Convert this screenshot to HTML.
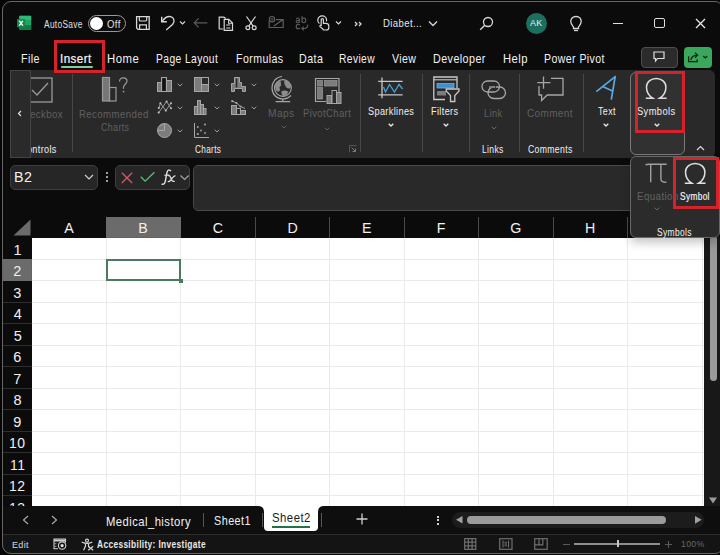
<!DOCTYPE html>
<html><head><meta charset="utf-8"><style>
html,body{margin:0;padding:0;}
body{width:720px;height:555px;overflow:hidden;position:relative;background:#0b0b0b;font-family:"Liberation Sans",sans-serif;}
.t{position:absolute;line-height:1;white-space:nowrap;transform-origin:0 0;}
svg{overflow:visible}
</style></head><body>
<svg style="position:absolute;left:16px;top:15px" width="16" height="16" viewBox="0 0 16 16" fill="none"><rect x="3.3" y="0.8" width="11.9" height="14.1" rx="1" fill="#1a8a50"/><rect x="3.3" y="0.8" width="11.9" height="4.7" fill="#2fb878"/><rect x="9" y="5.5" width="6.2" height="4.7" fill="#21a366"/><rect x="3.3" y="10.2" width="11.9" height="4.7" fill="#107c41"/><rect x="1" y="3.9" width="8.1" height="8.6" rx="0.8" fill="#13864b"/><path d="M3.2 5.8 L6.9 10.6 M6.9 5.8 L3.2 10.6" stroke="#e8fff0" stroke-width="1.4"/></svg>
<div id="t0" class="t" style="left:43.96px;top:20.41px;font-size:10.03px;color:#e0e0e0;font-weight:400;font-family:'Liberation Sans', sans-serif;font-style:normal;transform:scaleX(0.8317);letter-spacing:0.40px;">AutoSave</div>
<div style="position:absolute;left:87.5px;top:14.5px;width:38px;height:17.5px;border:1.7px solid #9a9a9a;border-radius:9px;box-sizing:border-box;"></div>
<div style="position:absolute;left:90.2px;top:16.8px;width:13.2px;height:13.2px;background:#fff;border-radius:50%;"></div>
<div id="t1" class="t" style="left:106.87px;top:20.41px;font-size:10.03px;color:#e0e0e0;font-weight:400;font-family:'Liberation Sans', sans-serif;font-style:normal;transform:scaleX(0.9566);letter-spacing:0.40px;">Off</div>
<svg style="position:absolute;left:135px;top:15px" width="16" height="16" viewBox="0 0 16 16" fill="none"><path d="M1.6 1.6 H14.2 V14.4 H3 L1.6 13 Z" stroke="#d8d8d8" stroke-width="1.3"/><path d="M4.3 1.6 V4.8 C4.3 5.6,4.8 6,5.5 6 H10.5 C11.2 6,11.7 5.6,11.7 4.8 V1.6" stroke="#d8d8d8" stroke-width="1.2"/><path d="M4.6 14.4 V9.8 H11.4 V14.4" stroke="#d8d8d8" stroke-width="1.2"/></svg>
<svg style="position:absolute;left:159px;top:15px" width="17" height="16" viewBox="0 0 17 16" fill="none"><path d="M2.7 1.7 V6.7 H7.8" stroke="#d8d8d8" stroke-width="1.4"/><path d="M3 6.5 C5 3.5,8 1.5,10.5 1.5 C13 1.5,15 3.5,15 6 C15 7.5,14.2 8.6,13.5 9.5 L7.2 15" stroke="#d8d8d8" stroke-width="1.3"/></svg>
<svg style="position:absolute;left:179px;top:20px" width="7" height="6" viewBox="0 0 7 6" fill="none"><path d="M1 1.5 L3.5 4 L6 1.5" stroke="#d8d8d8" stroke-width="1.2"/></svg>
<svg style="position:absolute;left:193px;top:17px" width="16" height="12" viewBox="0 0 16 12" fill="none"><path d="M1.2 5.8 H14.3 M5.6 1.3 L1.2 5.8 L5.6 10.3" stroke="#5c5c5c" stroke-width="1.2"/></svg>
<svg style="position:absolute;left:218px;top:15.5px" width="16" height="16" viewBox="0 0 16 16" fill="none"><path d="M5.2 13 H1.2 V1.2 H5.5 C6.5 1.2,7.2 1.9,7.4 2.8" stroke="#d8d8d8" stroke-width="1.2"/><path d="M6.2 3.3 H10.8 L14.5 7 V14.3 H6.2 Z" stroke="#d8d8d8" stroke-width="1.2" fill="#0b0b0b"/><path d="M10.6 3.5 V7.2 H14.3" stroke="#d8d8d8" stroke-width="1.1"/><path d="M8.2 9 H12.3 M8.2 12 H12.3" stroke="#d8d8d8" stroke-width="1"/></svg>
<svg style="position:absolute;left:245px;top:16px" width="12" height="15" viewBox="0 0 12 15" fill="none"><path d="M1.5 0.5 L8.2 10.2 M10.5 0.5 L3.8 10.2" stroke="#d8d8d8" stroke-width="1.2"/><circle cx="2.8" cy="11.7" r="1.9" stroke="#d8d8d8" stroke-width="1.2"/><circle cx="9.2" cy="11.7" r="1.9" stroke="#d8d8d8" stroke-width="1.2"/></svg>
<svg style="position:absolute;left:268px;top:15px" width="17" height="15" viewBox="0 0 17 15" fill="none"><path d="M1.2 5.5 V12.5 H15.2 V4.6 H8 M5.8 11 L15.2 4.6" stroke="#5e5e5e" stroke-width="1.2"/><circle cx="4" cy="4.2" r="2.7" fill="#0b0b0b" stroke="#5e5e5e" stroke-width="1.1"/><circle cx="4" cy="4.2" r="1" stroke="#5e5e5e" stroke-width="0.8"/></svg>
<svg style="position:absolute;left:295px;top:16px" width="15" height="15" viewBox="0 0 15 15" fill="none"><path d="M1.5 3.2 C1.5 2.2,2.3 2,3 2 C3.8 2,4.4 2.4,4.4 3.3 V6.5 M4.4 4.3 C2.8 4.3,1.2 4.5,1.2 5.5 C1.2 6.4,2 6.7,2.7 6.7 C3.6 6.7,4.4 6,4.4 5.2 M7 0 V6.6 M7 4.3 C7 3,7.8 2,9 2 C10.2 2,10.8 3,10.8 4.3 C10.8 5.6,10.2 6.7,9 6.7 C7.8 6.7,7 5.6,7 4.3 M5 9 C4.3 8.3,3.8 8.2,3.2 8.2 C2 8.2,1.2 9.2,1.2 10.5 C1.2 11.8,2 12.8,3.2 12.8 C3.8 12.8,4.3 12.6,5 12 M12.8 8.5 C12.8 11,11.5 12.5,9 12.5 H7 M8.8 10.6 L6.8 12.5 L8.8 14.4" stroke="#5e5e5e" stroke-width="1.1"/></svg>
<svg style="position:absolute;left:316.5px;top:15px" width="13" height="16" viewBox="0 0 13 16" fill="none"><path d="M2.4 8.6 C1.3 7.7,0.8 6.5,0.8 5.2 C0.8 2.7,2.7 0.8,5.2 0.8 C7.6 0.8,9.6 2.7,9.6 5.2 C9.6 5.6,9.5 6,9.4 6.4" stroke="#d8d8d8" stroke-width="1.2"/><path d="M4.2 10.6 V4.6 C4.2 3.4,6.4 3.4,6.4 4.6 V8.3 H8.8 C10.6 8.3,11.8 9.4,11.8 11 V12.4 C11.8 14,10.6 15,9.2 15 H6.8 L3 11.6 C2.4 11,3.2 10,4.2 10.6 Z" fill="#0b0b0b" stroke="#d8d8d8" stroke-width="1.2" stroke-linejoin="round"/></svg>
<svg style="position:absolute;left:335px;top:20px" width="7" height="6" viewBox="0 0 7 6" fill="none"><path d="M1 1.5 L3.5 4 L6 1.5" stroke="#d8d8d8" stroke-width="1.2"/></svg>
<svg style="position:absolute;left:354px;top:21px" width="8" height="6" viewBox="0 0 8 6" fill="none"><path d="M1 1 L3 3 L1 5 M5 1 L7 3 L5 5" stroke="#d8d8d8" stroke-width="1.3"/></svg>
<div id="t2" class="t" style="left:383.24px;top:17.77px;font-size:10.90px;color:#e6e6e6;font-weight:400;font-family:'Liberation Sans', sans-serif;font-style:normal;transform:scaleX(0.8770);letter-spacing:0.44px;">Diabet...</div>
<svg style="position:absolute;left:428px;top:20px" width="10" height="7" viewBox="0 0 10 7" fill="none"><path d="M1 1.5 L5 5.5 L9 1.5" stroke="#d8d8d8" stroke-width="1.3"/></svg>
<svg style="position:absolute;left:479px;top:16px" width="15" height="15" viewBox="0 0 15 15" fill="none"><circle cx="9" cy="6" r="4.5" stroke="#d8d8d8" stroke-width="1.3"/><path d="M5.8 9.2 L1.2 13.8" stroke="#d8d8d8" stroke-width="1.4"/></svg>
<div style="position:absolute;left:525.5px;top:12.5px;width:21px;height:21px;background:#1c6f5f;border-radius:50%;"></div>
<div id="t3" class="t" style="left:529.93px;top:18.54px;font-size:9.16px;color:#e8f0ee;font-weight:400;font-family:'Liberation Sans', sans-serif;font-style:normal;transform:scaleX(0.9705);letter-spacing:0.37px;">AK</div>
<svg style="position:absolute;left:569px;top:15px" width="14" height="17" viewBox="0 0 14 17" fill="none"><path d="M7 1.5 C3.5 1.5,1.8 4,1.8 6.5 C1.8 9,3.8 10.5,4.5 12 V13.5 H9.5 V12 C10.2 10.5,12.2 9,12.2 6.5 C12.2 4,10.5 1.5,7 1.5 Z" stroke="#d8d8d8" stroke-width="1.3"/><path d="M5 15.5 H9" stroke="#d8d8d8" stroke-width="1.3"/></svg>
<div style="position:absolute;left:612.5px;top:22.5px;width:10px;height:1.3px;background:#e0e0e0;"></div>
<div style="position:absolute;left:654px;top:18.3px;width:10.5px;height:10px;border:1.3px solid #e0e0e0;border-radius:2px;box-sizing:border-box;"></div>
<svg style="position:absolute;left:695px;top:18px" width="11" height="11" viewBox="0 0 11 11" fill="none"><path d="M1 1 L10 10 M10 1 L1 10" stroke="#e8e8e8" stroke-width="1.3"/></svg>
<div id="t4" class="t" style="left:21.00px;top:52.88px;font-size:12.06px;color:#f2f2f2;font-weight:400;font-family:'Liberation Sans', sans-serif;font-style:normal;transform:scaleX(0.8871);letter-spacing:0.48px;">File</div>
<div id="t5" class="t" style="left:59.93px;top:52.88px;font-size:12.06px;color:#f2f2f2;font-weight:400;font-family:'Liberation Sans', sans-serif;font-style:normal;transform:scaleX(0.9618);-webkit-text-stroke:0.22px #f2f2f2;letter-spacing:0.48px;">Insert</div>
<div id="t6" class="t" style="left:107.22px;top:52.88px;font-size:12.06px;color:#f2f2f2;font-weight:400;font-family:'Liberation Sans', sans-serif;font-style:normal;transform:scaleX(0.9443);letter-spacing:0.48px;">Home</div>
<div id="t7" class="t" style="left:156.18px;top:52.88px;font-size:12.06px;color:#f2f2f2;font-weight:400;font-family:'Liberation Sans', sans-serif;font-style:normal;transform:scaleX(0.8527);letter-spacing:0.48px;">Page Layout</div>
<div id="t8" class="t" style="left:236.15px;top:52.88px;font-size:12.06px;color:#f2f2f2;font-weight:400;font-family:'Liberation Sans', sans-serif;font-style:normal;transform:scaleX(0.8796);letter-spacing:0.48px;">Formulas</div>
<div id="t9" class="t" style="left:299.28px;top:52.88px;font-size:12.06px;color:#f2f2f2;font-weight:400;font-family:'Liberation Sans', sans-serif;font-style:normal;transform:scaleX(0.8867);letter-spacing:0.48px;">Data</div>
<div id="t10" class="t" style="left:339.18px;top:52.88px;font-size:12.06px;color:#f2f2f2;font-weight:400;font-family:'Liberation Sans', sans-serif;font-style:normal;transform:scaleX(0.8503);letter-spacing:0.48px;">Review</div>
<div id="t11" class="t" style="left:391.95px;top:52.88px;font-size:12.06px;color:#f2f2f2;font-weight:400;font-family:'Liberation Sans', sans-serif;font-style:normal;transform:scaleX(0.8767);letter-spacing:0.48px;">View</div>
<div id="t12" class="t" style="left:432.55px;top:52.88px;font-size:12.06px;color:#f2f2f2;font-weight:400;font-family:'Liberation Sans', sans-serif;font-style:normal;transform:scaleX(0.8917);letter-spacing:0.48px;">Developer</div>
<div id="t13" class="t" style="left:502.81px;top:52.88px;font-size:12.06px;color:#f2f2f2;font-weight:400;font-family:'Liberation Sans', sans-serif;font-style:normal;transform:scaleX(0.9345);letter-spacing:0.48px;">Help</div>
<div id="t14" class="t" style="left:544.16px;top:52.88px;font-size:12.06px;color:#f2f2f2;font-weight:400;font-family:'Liberation Sans', sans-serif;font-style:normal;transform:scaleX(0.8763);letter-spacing:0.48px;">Power Pivot</div>
<div style="position:absolute;left:61px;top:65.6px;width:31.5px;height:2.1px;background:#86cc96;border-radius:1px;"></div>
<div style="position:absolute;left:641px;top:46.5px;width:36.5px;height:21px;background:#2b2b2b;border:1px solid #4e4e4e;border-radius:4px;box-sizing:border-box;"></div>
<svg style="position:absolute;left:653px;top:51px" width="12" height="11" viewBox="0 0 12 11" fill="none"><path d="M1 1 H11 V7.5 H4.5 L2.5 10 V7.5 H1 Z" stroke="#e0e0e0" stroke-width="1.2"/></svg>
<div style="position:absolute;left:684px;top:46.5px;width:27.5px;height:21px;background:#3aa75c;border-radius:4px;"></div>
<svg style="position:absolute;left:687px;top:51px" width="22" height="12" viewBox="0 0 22 12" fill="none"><path d="M1.6 5.2 V10.6 H10.2 V8.2" stroke="#0a2612" stroke-width="1.2"/><path d="M3.8 9.2 C4.2 6.2,6.2 4.3,10.2 4.3" stroke="#0a2612" stroke-width="1.2"/><path d="M8 1.8 L10.6 4.3 L8 6.8" stroke="#0a2612" stroke-width="1.2"/><path d="M16.2 5 L18.2 7 L20.2 5" stroke="#0a2612" stroke-width="1.2"/></svg>
<div style="position:absolute;left:9.5px;top:70px;width:705px;height:87.5px;background:#292929;border-radius:6px;"></div>
<svg style="position:absolute;left:26px;top:77px" width="27" height="26" viewBox="0 0 27 26" fill="none"><rect x="1" y="1" width="25" height="24" stroke="#9a9a9a" stroke-width="1.3"/><path d="M6 13 L11 18 L22 6" stroke="#9a9a9a" stroke-width="1.3"/></svg>
<div id="t15" class="t" style="left:16.52px;top:109.01px;font-size:10.61px;color:#606060;font-weight:400;font-family:'Liberation Sans', sans-serif;font-style:normal;transform:scaleX(0.9091);letter-spacing:0.42px;">Checkbox</div>
<div id="t16" class="t" style="left:20.38px;top:144.71px;font-size:10.03px;color:#f0f0f0;font-weight:400;font-family:'Liberation Sans', sans-serif;font-style:normal;transform:scaleX(0.9083);letter-spacing:0.40px;">Controls</div>
<div style="position:absolute;left:71.5px;top:74px;width:1px;height:77.5px;background:#474747;"></div>
<svg style="position:absolute;left:101px;top:76px" width="29" height="27" viewBox="0 0 29 27" fill="none"><rect x="1.5" y="1.5" width="7" height="23.5" stroke="#9a9a9a" stroke-width="1.2" fill="#767676"/><rect x="8.5" y="11.5" width="6.5" height="13.5" stroke="#9a9a9a" stroke-width="1.2"/><path d="M18.5 5.5 C18.5 2.8,20.3 1.8,22.3 1.8 C24.5 1.8,26 3.2,26 5.2 C26 7.8,22.5 8.3,22.5 11.5 V12.8" stroke="#9a9a9a" stroke-width="1.2"/><circle cx="22.5" cy="15.6" r="0.9" fill="#9a9a9a"/></svg>
<div id="t17" class="t" style="left:79.23px;top:109.01px;font-size:10.61px;color:#606060;font-weight:400;font-family:'Liberation Sans', sans-serif;font-style:normal;transform:scaleX(0.9110);letter-spacing:0.42px;">Recommended</div>
<div id="t18" class="t" style="left:100.54px;top:121.51px;font-size:10.61px;color:#606060;font-weight:400;font-family:'Liberation Sans', sans-serif;font-style:normal;transform:scaleX(0.8386);letter-spacing:0.42px;">Charts</div>
<svg style="position:absolute;left:156.5px;top:76.5px" width="16" height="16" viewBox="0 0 16 16" fill="none"><rect x="0.5" y="5.5" width="4" height="9" fill="#7c7c7c" stroke="#a6a6a6"/><rect x="4.5" y="0.5" width="5" height="14" fill="#2a2a2a" stroke="#a6a6a6"/><rect x="5.8" y="1.8" width="2.4" height="11.4" fill="#111"/><rect x="9.5" y="3.5" width="5" height="11" fill="#7c7c7c" stroke="#a6a6a6"/></svg>
<svg style="position:absolute;left:177.0px;top:83.0px" width="6" height="4" viewBox="0 0 6 4" fill="none"><path d="M0.7 0.7 L3 3 L5.3 0.7" stroke="#9a9a9a" stroke-width="1"/></svg>
<svg style="position:absolute;left:193.5px;top:76.5px" width="16" height="16" viewBox="0 0 16 16" fill="none"><rect x="0.5" y="0.5" width="14" height="14" stroke="#a6a6a6" fill="#7c7c7c"/><rect x="7.5" y="0.5" width="7" height="7" fill="#2a2a2a" stroke="#a6a6a6"/><path d="M7.5 7.5 V14.5" stroke="#a6a6a6"/></svg>
<svg style="position:absolute;left:214.0px;top:83.0px" width="6" height="4" viewBox="0 0 6 4" fill="none"><path d="M0.7 0.7 L3 3 L5.3 0.7" stroke="#9a9a9a" stroke-width="1"/></svg>
<svg style="position:absolute;left:230.5px;top:76.5px" width="16" height="16" viewBox="0 0 16 16" fill="none"><path d="M0.5 14.5 V6.5 H3.5 V0.5 H8.5 V5.5 H10.5 V9.5 H14.5 V14.5 H11.5 V11.5 H3.5 V14.5 Z" stroke="#a6a6a6" fill="#7c7c7c"/><path d="M5.5 1.5 V10.5" stroke="#2a2a2a" stroke-width="1.5"/></svg>
<svg style="position:absolute;left:251.0px;top:83.0px" width="6" height="4" viewBox="0 0 6 4" fill="none"><path d="M0.7 0.7 L3 3 L5.3 0.7" stroke="#9a9a9a" stroke-width="1"/></svg>
<svg style="position:absolute;left:156.5px;top:99.5px" width="16" height="16" viewBox="0 0 16 16" fill="none"><path d="M1.7 12.6 L9.6 1.5 L14 8.2 M1.8 8 L3.4 3.2 L8.8 10.6 L14 3.2" stroke="#a6a6a6" stroke-width="0.9"/><circle cx="1.7" cy="12.6" r="1.05" fill="#c0c0c0"/><circle cx="9.6" cy="1.5" r="1.05" fill="#c0c0c0"/><circle cx="14" cy="8.2" r="1.05" fill="#c0c0c0"/><circle cx="1.8" cy="8" r="1.05" fill="#c0c0c0"/><circle cx="3.4" cy="3.2" r="1.05" fill="#c0c0c0"/><circle cx="8.8" cy="10.6" r="1.05" fill="#c0c0c0"/><circle cx="14" cy="3.2" r="1.05" fill="#c0c0c0"/></svg>
<svg style="position:absolute;left:177.0px;top:106.0px" width="6" height="4" viewBox="0 0 6 4" fill="none"><path d="M0.7 0.7 L3 3 L5.3 0.7" stroke="#9a9a9a" stroke-width="1"/></svg>
<svg style="position:absolute;left:193.5px;top:99.5px" width="16" height="16" viewBox="0 0 16 16" fill="none"><rect x="0.5" y="6.5" width="3" height="8" fill="#7c7c7c" stroke="#a6a6a6"/><rect x="3.5" y="0.5" width="3" height="14" fill="#7c7c7c" stroke="#a6a6a6"/><rect x="6.5" y="4.5" width="3" height="10" fill="#7c7c7c" stroke="#a6a6a6"/><rect x="9.5" y="8.5" width="2.5" height="6" fill="#7c7c7c" stroke="#a6a6a6"/></svg>
<svg style="position:absolute;left:214.0px;top:106.0px" width="6" height="4" viewBox="0 0 6 4" fill="none"><path d="M0.7 0.7 L3 3 L5.3 0.7" stroke="#9a9a9a" stroke-width="1"/></svg>
<svg style="position:absolute;left:230.5px;top:99.5px" width="16" height="16" viewBox="0 0 16 16" fill="none"><rect x="0.5" y="5.5" width="5" height="9" fill="#7c7c7c" stroke="#a6a6a6"/><rect x="5.5" y="8.5" width="4" height="6" fill="#2a2a2a" stroke="#a6a6a6"/><rect x="9.5" y="10.5" width="5" height="4" fill="#7c7c7c" stroke="#a6a6a6"/><path d="M1 1 L5.5 3 L9.5 6.5 L14 8.5" stroke="#a6a6a6"/><circle cx="1.2" cy="1.2" r="1.1" fill="#a6a6a6"/><circle cx="5.5" cy="3" r="1.1" fill="#a6a6a6"/><circle cx="9.5" cy="6.5" r="1.1" fill="#a6a6a6"/></svg>
<svg style="position:absolute;left:251.0px;top:106.0px" width="6" height="4" viewBox="0 0 6 4" fill="none"><path d="M0.7 0.7 L3 3 L5.3 0.7" stroke="#9a9a9a" stroke-width="1"/></svg>
<svg style="position:absolute;left:156.5px;top:122.5px" width="16" height="16" viewBox="0 0 16 16" fill="none"><circle cx="7.5" cy="7.5" r="7" fill="#7c7c7c" stroke="#a6a6a6"/><path d="M7.5 0.5 V7.5 H0.5" stroke="#a6a6a6" stroke-width="1"/><path d="M3 3 A4.5 4.5 0 0 1 6.5 1.5" stroke="#a6a6a6" stroke-width="0.8"/></svg>
<svg style="position:absolute;left:177.0px;top:129.0px" width="6" height="4" viewBox="0 0 6 4" fill="none"><path d="M0.7 0.7 L3 3 L5.3 0.7" stroke="#9a9a9a" stroke-width="1"/></svg>
<svg style="position:absolute;left:193.5px;top:122.5px" width="16" height="16" viewBox="0 0 16 16" fill="none"><path d="M0.5 0 V14.5 H15" stroke="#a6a6a6" stroke-width="1"/><circle cx="3.8" cy="4" r="0.9" fill="#a6a6a6"/><circle cx="11" cy="1.5" r="1" fill="#a6a6a6"/><circle cx="7" cy="7.5" r="0.9" fill="#a6a6a6"/><circle cx="11" cy="10" r="0.9" fill="#a6a6a6"/><circle cx="3.8" cy="11" r="1.1" fill="#a6a6a6"/></svg>
<svg style="position:absolute;left:214.0px;top:129.0px" width="6" height="4" viewBox="0 0 6 4" fill="none"><path d="M0.7 0.7 L3 3 L5.3 0.7" stroke="#9a9a9a" stroke-width="1"/></svg>
<div id="t19" class="t" style="left:194.58px;top:144.71px;font-size:10.03px;color:#f0f0f0;font-weight:400;font-family:'Liberation Sans', sans-serif;font-style:normal;transform:scaleX(0.8221);letter-spacing:0.40px;">Charts</div>
<svg style="position:absolute;left:270px;top:75px" width="24" height="28" viewBox="0 0 24 28" fill="none"><circle cx="12.9" cy="13" r="8.4" stroke="#a6a6a6" stroke-width="1.1"/><path d="M7 6.5 C5 8.5,4.6 12,5.8 15 C7 17.2,9 16.8,10 15.2 L9.4 12.2 L11.2 10.2 L10.6 6 Z M14.2 5.6 C17 5.6,20 7.6,21.2 11 C20.6 14,18 14.2,16.4 12.6 C15.3 11,13.8 9,14.2 5.6 Z M11.4 16.4 C13 15.3,16 15.3,18.4 16.8 C17.4 19.6,15.2 21,13.2 21.2 C12 20.2,11.4 18.2,11.4 16.4 Z" fill="#8c8c8c"/><path d="M12 1.5 C6 2,2 7,2 13 C2 19,6.5 24,13 24 C16 24,19 22.5,21 20.5" stroke="#a6a6a6" stroke-width="1.2"/><path d="M12.8 24 V26.2 M5.6 26.6 H20.2" stroke="#a6a6a6" stroke-width="1.3"/></svg>
<div id="t20" class="t" style="left:268.10px;top:107.51px;font-size:10.61px;color:#606060;font-weight:400;font-family:'Liberation Sans', sans-serif;font-style:normal;transform:scaleX(0.9617);letter-spacing:0.42px;">Maps</div>
<svg style="position:absolute;left:281px;top:125px" width="6" height="4" viewBox="0 0 6 4" fill="none"><path d="M0.7 0.7 L3 3 L5.3 0.7" stroke="#5e5e5e" stroke-width="1"/></svg>
<svg style="position:absolute;left:314px;top:77px" width="29" height="28" viewBox="0 0 29 28" fill="none"><path d="M12 24.5 H1.5 V1.5 H25 V15" stroke="#a6a6a6" stroke-width="1.2"/><rect x="3.5" y="3.5" width="5" height="5.5" fill="#7c7c7c" stroke="#9a9a9a" stroke-width="0.7"/><rect x="10.5" y="3.5" width="12.5" height="5.5" fill="#7c7c7c" stroke="#9a9a9a" stroke-width="0.7"/><rect x="3.5" y="10.5" width="5" height="11.5" fill="#7c7c7c" stroke="#9a9a9a" stroke-width="0.7"/><rect x="13" y="18.5" width="4.5" height="8" fill="#7c7c7c" stroke="#a6a6a6"/><rect x="18" y="13.5" width="4.5" height="13" fill="#2a2a2a" stroke="#a6a6a6"/><rect x="22.5" y="15.5" width="4.5" height="11" fill="#7c7c7c" stroke="#a6a6a6"/></svg>
<div id="t21" class="t" style="left:302.52px;top:107.51px;font-size:10.61px;color:#606060;font-weight:400;font-family:'Liberation Sans', sans-serif;font-style:normal;transform:scaleX(0.8967);letter-spacing:0.42px;">PivotChart</div>
<svg style="position:absolute;left:323.5px;top:126.5px" width="6" height="4" viewBox="0 0 6 4" fill="none"><path d="M0.7 0.7 L3 3 L5.3 0.7" stroke="#5e5e5e" stroke-width="1"/></svg>
<svg style="position:absolute;left:349px;top:145px" width="8" height="8" viewBox="0 0 8 8" fill="none"><path d="M0.5 7.5 V0.5 H7.5" stroke="#555" stroke-width="1"/><path d="M2.5 2.5 L6.5 6.5 M6.5 3.5 V6.5 H3.5" stroke="#7a7a7a" stroke-width="1"/></svg>
<div style="position:absolute;left:359.5px;top:74px;width:1px;height:77.5px;background:#474747;"></div>
<svg style="position:absolute;left:377px;top:77px" width="27" height="22" viewBox="0 0 27 22" fill="none"><path d="M1.2 4.4 H25.6 M1.2 17.9 H25.6 M5 0.6 V21.2" stroke="#c8c8c8" stroke-width="1.3"/><path d="M6.5 10 L8.5 15 L12.5 7.5 L17.5 15 L22 7.5 L25.6 12" stroke="#4b9fd8" stroke-width="1.3"/></svg>
<div id="t22" class="t" style="left:367.66px;top:105.64px;font-size:11.05px;color:#f0f0f0;font-weight:400;font-family:'Liberation Sans', sans-serif;font-style:normal;transform:scaleX(0.8269);letter-spacing:0.44px;">Sparklines</div>
<svg style="position:absolute;left:387.5px;top:123px" width="6" height="4" viewBox="0 0 6 4" fill="none"><path d="M0.7 0.7 L3 3 L5.3 0.7" stroke="#e8e8e8" stroke-width="1.3"/></svg>
<div style="position:absolute;left:421.5px;top:74px;width:1px;height:77.5px;background:#474747;"></div>
<svg style="position:absolute;left:432px;top:76px" width="29" height="27" viewBox="0 0 29 27" fill="none"><path d="M13 23.5 H1.8 V1 H25 V12" stroke="#c8c8c8" stroke-width="1.3"/><path d="M1.8 3.8 H25" stroke="#c8c8c8" stroke-width="1.1"/><rect x="5" y="7.5" width="17" height="4.5" fill="#3c8fd0" stroke="#6ab0e8" stroke-width="0.8"/><rect x="5" y="15" width="9" height="4.5" fill="#7c7c7c"/><path d="M14.2 13 H27 V15 L22.8 19.5 V25.5 H18.5 V19.5 L14.2 15 Z" fill="#292929" stroke="#c8c8c8" stroke-width="1.3"/></svg>
<div id="t23" class="t" style="left:431.27px;top:105.64px;font-size:11.05px;color:#f0f0f0;font-weight:400;font-family:'Liberation Sans', sans-serif;font-style:normal;transform:scaleX(0.8273);letter-spacing:0.44px;">Filters</div>
<svg style="position:absolute;left:443px;top:123px" width="6" height="4" viewBox="0 0 6 4" fill="none"><path d="M0.7 0.7 L3 3 L5.3 0.7" stroke="#e8e8e8" stroke-width="1.3"/></svg>
<div style="position:absolute;left:468.5px;top:74px;width:1px;height:77.5px;background:#474747;"></div>
<svg style="position:absolute;left:481px;top:80px" width="26" height="20" viewBox="0 0 26 20" fill="none"><rect x="1" y="1" width="17.5" height="11" rx="5.5" stroke="#a6a6a6" stroke-width="1.3"/><rect x="7" y="7" width="17.5" height="11.5" rx="5.7" stroke="#a6a6a6" stroke-width="1.3"/><path d="M7.5 7 H15" stroke="#292929" stroke-width="1.5"/><path d="M8 7 H14" stroke="#a6a6a6" stroke-width="1.3"/></svg>
<div id="t24" class="t" style="left:483.91px;top:108.44px;font-size:11.05px;color:#606060;font-weight:400;font-family:'Liberation Sans', sans-serif;font-style:normal;transform:scaleX(0.8393);letter-spacing:0.44px;">Link</div>
<svg style="position:absolute;left:490.5px;top:125.5px" width="6" height="4" viewBox="0 0 6 4" fill="none"><path d="M0.7 0.7 L3 3 L5.3 0.7" stroke="#6a6a6a" stroke-width="1"/></svg>
<div id="t25" class="t" style="left:482.32px;top:144.71px;font-size:10.03px;color:#f0f0f0;font-weight:400;font-family:'Liberation Sans', sans-serif;font-style:normal;transform:scaleX(0.8538);letter-spacing:0.40px;">Links</div>
<div style="position:absolute;left:518.5px;top:74px;width:1px;height:77.5px;background:#474747;"></div>
<svg style="position:absolute;left:536px;top:75px" width="29" height="27" viewBox="0 0 29 27" fill="none"><path d="M3 11 V20 H5.6 V25.5 L11.2 20 H27 V3.3 H15" stroke="#a6a6a6" stroke-width="1.3"/><path d="M7.5 1.4 V13.8 M1.3 7.6 H14.4" stroke="#a6a6a6" stroke-width="1.3"/></svg>
<div id="t26" class="t" style="left:527.35px;top:108.44px;font-size:11.05px;color:#606060;font-weight:400;font-family:'Liberation Sans', sans-serif;font-style:normal;transform:scaleX(0.8993);letter-spacing:0.44px;">Comment</div>
<div id="t27" class="t" style="left:527.56px;top:144.71px;font-size:10.03px;color:#f0f0f0;font-weight:400;font-family:'Liberation Sans', sans-serif;font-style:normal;transform:scaleX(0.8639);letter-spacing:0.40px;">Comments</div>
<div style="position:absolute;left:582.5px;top:74px;width:1px;height:77.5px;background:#474747;"></div>
<svg style="position:absolute;left:595px;top:75px" width="22" height="26" viewBox="0 0 22 26" fill="none"><path d="M1.9 16.1 L20.2 1.6 L16.4 24 M8.2 11.7 L17 15.8" stroke="#5aa8e4" stroke-width="1.7" stroke-linecap="round" stroke-linejoin="round"/></svg>
<div id="t28" class="t" style="left:597.85px;top:105.50px;font-size:11.34px;color:#f0f0f0;font-weight:400;font-family:'Liberation Sans', sans-serif;font-style:normal;transform:scaleX(0.7891);letter-spacing:0.45px;">Text</div>
<svg style="position:absolute;left:603px;top:123px" width="6" height="4" viewBox="0 0 6 4" fill="none"><path d="M0.7 0.7 L3 3 L5.3 0.7" stroke="#e8e8e8" stroke-width="1.3"/></svg>
<div style="position:absolute;left:629.5px;top:71.5px;width:55px;height:83px;background:#313131;border:1.2px solid #7a7a7a;border-radius:6px;box-sizing:border-box;"></div>
<svg style="position:absolute;left:645px;top:77px" width="23" height="23" viewBox="0 0 23 23" fill="none"><path d="M0.8 21.2 H7.8 C3.5 18.5, 1.5 14.5, 1.5 10.2 C1.5 5, 5.8 1.5, 11.2 1.5 C16.6 1.5, 20.9 5, 20.9 10.2 C20.9 14.5, 18.9 18.5, 14.6 21.2 H21.6" stroke="#dcdcdc" stroke-width="1.5"/></svg>
<div id="t29" class="t" style="left:637.29px;top:105.50px;font-size:11.34px;color:#f0f0f0;font-weight:400;font-family:'Liberation Sans', sans-serif;font-style:normal;transform:scaleX(0.8252);letter-spacing:0.45px;">Symbols</div>
<svg style="position:absolute;left:653.5px;top:123px" width="6" height="4" viewBox="0 0 6 4" fill="none"><path d="M0.7 0.7 L3 3 L5.3 0.7" stroke="#e8e8e8" stroke-width="1.3"/></svg>
<div style="position:absolute;left:634.5px;top:70.5px;width:50.5px;height:62px;border:3px solid #d4232a;box-sizing:border-box;"></div>
<svg style="position:absolute;left:696px;top:145px" width="9" height="6" viewBox="0 0 9 6" fill="none"><path d="M1 5 L4.5 1.5 L8 5" stroke="#d8d8d8" stroke-width="1.2"/></svg>
<div style="position:absolute;left:10px;top:70px;width:21px;height:87.5px;background:#2a2a2a;border:1px solid #444;box-sizing:border-box;"></div>
<svg style="position:absolute;left:17px;top:110px" width="5" height="7" viewBox="0 0 5 7" fill="none"><path d="M4 1 L1.5 3.5 L4 6" stroke="#e0e0e0" stroke-width="1.2"/></svg>
<div style="position:absolute;left:9.5px;top:164.5px;width:88.5px;height:25.5px;background:#262626;border:1px solid #3e3e3e;border-radius:5px;box-sizing:border-box;"></div>
<div id="t30" class="t" style="left:13.54px;top:168.90px;font-size:15.12px;color:#f0f0f0;font-weight:400;font-family:'Liberation Sans', sans-serif;font-style:normal;transform:scaleX(0.9425);letter-spacing:0.60px;">B2</div>
<svg style="position:absolute;left:84px;top:174px" width="10" height="6" viewBox="0 0 10 6" fill="none"><path d="M1 1 L5 5 L9 1" stroke="#d0d0d0" stroke-width="1.2"/></svg>
<div style="position:absolute;left:106px;top:172px;width:2px;height:2px;background:#d0d0d0;border-radius:1px;"></div>
<div style="position:absolute;left:106px;top:176px;width:2px;height:2px;background:#d0d0d0;border-radius:1px;"></div>
<div style="position:absolute;left:106px;top:180px;width:2px;height:2px;background:#d0d0d0;border-radius:1px;"></div>
<div style="position:absolute;left:115px;top:164.5px;width:74.5px;height:25.5px;background:#262626;border:1px solid #3e3e3e;border-radius:5px;box-sizing:border-box;"></div>
<svg style="position:absolute;left:120.5px;top:171.5px" width="12" height="12" viewBox="0 0 12 12" fill="none"><path d="M0.8 0.8 L11.2 11 M11.2 0.8 L0.8 11" stroke="#d85a68" stroke-width="1.2"/></svg>
<svg style="position:absolute;left:140px;top:171px" width="16" height="12" viewBox="0 0 16 12" fill="none"><path d="M0.8 5.8 L5.2 10.2 L14.4 1.2" stroke="#5cbf78" stroke-width="1.3"/></svg>
<svg style="position:absolute;left:161px;top:169px" width="16" height="17" viewBox="0 0 16 17" fill="none"><path d="M9.6 1.6 C8.2 0.6,6.6 1,6 3.4 L4.2 12.6 C3.8 14.6,2.8 15.6,1 15.1" stroke="#e2e2e2" stroke-width="1.4" stroke-linecap="round"/><path d="M3.4 6.2 H8.6" stroke="#e2e2e2" stroke-width="1.2"/><path d="M7.6 6.6 C8.8 6.4,9.4 7.4,10 9.4 C10.6 11.6,11.2 12.8,13.2 12.4 M14 6.8 C12.6 7,10.6 9.8,9.2 11.6 C8.6 12.4,8 12.8,7.2 12.5" stroke="#e2e2e2" stroke-width="1.3" stroke-linecap="round"/></svg>
<svg style="position:absolute;left:179.5px;top:174.5px" width="10" height="6" viewBox="0 0 10 6" fill="none"><path d="M0.5 0.5 L4.6 4.5 L8.7 0.5" stroke="#a8a8a8" stroke-width="1.1"/></svg>
<div style="position:absolute;left:193px;top:164.5px;width:540px;height:46px;background:#292929;border:1px solid #484848;border-radius:5px;box-sizing:border-box;"></div>
<div style="position:absolute;left:3px;top:216.5px;width:701px;height:21px;background:#0b0b0b;"></div>
<svg style="position:absolute;left:13px;top:219px" width="18" height="17" viewBox="0 0 18 17" fill="none"><path d="M17.5 0.5 V16.5 H0.5 Z" fill="#6b6b6b"/></svg>
<div style="position:absolute;left:32px;top:237.5px;width:672px;height:268.5px;background:#fff;"></div>
<div style="position:absolute;left:32px;top:258.50px;width:672px;height:1px;background:#eaeaea"></div>
<div style="position:absolute;left:32px;top:280.00px;width:672px;height:1px;background:#eaeaea"></div>
<div style="position:absolute;left:32px;top:301.50px;width:672px;height:1px;background:#eaeaea"></div>
<div style="position:absolute;left:32px;top:323.00px;width:672px;height:1px;background:#eaeaea"></div>
<div style="position:absolute;left:32px;top:344.50px;width:672px;height:1px;background:#eaeaea"></div>
<div style="position:absolute;left:32px;top:366.00px;width:672px;height:1px;background:#eaeaea"></div>
<div style="position:absolute;left:32px;top:387.50px;width:672px;height:1px;background:#eaeaea"></div>
<div style="position:absolute;left:32px;top:409.00px;width:672px;height:1px;background:#eaeaea"></div>
<div style="position:absolute;left:32px;top:430.50px;width:672px;height:1px;background:#eaeaea"></div>
<div style="position:absolute;left:32px;top:452.00px;width:672px;height:1px;background:#eaeaea"></div>
<div style="position:absolute;left:32px;top:473.50px;width:672px;height:1px;background:#eaeaea"></div>
<div style="position:absolute;left:32px;top:495.00px;width:672px;height:1px;background:#eaeaea"></div>
<div style="position:absolute;left:105.95px;top:237.5px;width:1px;height:268.5px;background:#eaeaea"></div>
<div style="position:absolute;left:180.40px;top:237.5px;width:1px;height:268.5px;background:#eaeaea"></div>
<div style="position:absolute;left:254.85px;top:237.5px;width:1px;height:268.5px;background:#eaeaea"></div>
<div style="position:absolute;left:329.30px;top:237.5px;width:1px;height:268.5px;background:#eaeaea"></div>
<div style="position:absolute;left:403.75px;top:237.5px;width:1px;height:268.5px;background:#eaeaea"></div>
<div style="position:absolute;left:478.20px;top:237.5px;width:1px;height:268.5px;background:#eaeaea"></div>
<div style="position:absolute;left:552.65px;top:237.5px;width:1px;height:268.5px;background:#eaeaea"></div>
<div style="position:absolute;left:627.10px;top:237.5px;width:1px;height:268.5px;background:#eaeaea"></div>
<div style="position:absolute;left:701.55px;top:237.5px;width:1px;height:268.5px;background:#eaeaea"></div>
<div style="position:absolute;left:106.45px;top:216.5px;width:74.45px;height:21px;background:#6b6b6b;"></div>
<div style="position:absolute;left:106.45px;top:236.5px;width:74.45px;height:1px;background:#3b7a57;"></div>
<div id="t31" class="t" style="left:64.33px;top:220.74px;font-size:14.24px;color:#f0f0f0;font-weight:400;font-family:'Liberation Sans', sans-serif;font-style:normal;">A</div>
<div id="t32" class="t" style="left:138.37px;top:220.74px;font-size:14.24px;color:#f0f0f0;font-weight:400;font-family:'Liberation Sans', sans-serif;font-style:normal;">B</div>
<div id="t33" class="t" style="left:212.73px;top:220.74px;font-size:14.24px;color:#f0f0f0;font-weight:400;font-family:'Liberation Sans', sans-serif;font-style:normal;">C</div>
<div id="t34" class="t" style="left:287.56px;top:220.74px;font-size:14.24px;color:#f0f0f0;font-weight:400;font-family:'Liberation Sans', sans-serif;font-style:normal;">D</div>
<div id="t35" class="t" style="left:362.12px;top:220.74px;font-size:14.24px;color:#f0f0f0;font-weight:400;font-family:'Liberation Sans', sans-serif;font-style:normal;">E</div>
<div id="t36" class="t" style="left:436.73px;top:220.74px;font-size:14.24px;color:#f0f0f0;font-weight:400;font-family:'Liberation Sans', sans-serif;font-style:normal;">F</div>
<div id="t37" class="t" style="left:510.19px;top:220.74px;font-size:14.24px;color:#f0f0f0;font-weight:400;font-family:'Liberation Sans', sans-serif;font-style:normal;">G</div>
<div id="t38" class="t" style="left:585.05px;top:220.74px;font-size:14.24px;color:#f0f0f0;font-weight:400;font-family:'Liberation Sans', sans-serif;font-style:normal;">H</div>
<div id="t39" class="t" style="left:662.83px;top:220.74px;font-size:14.24px;color:#f0f0f0;font-weight:400;font-family:'Liberation Sans', sans-serif;font-style:normal;">I</div>
<div style="position:absolute;left:254.85000000000002px;top:216.5px;width:1px;height:21px;background:#4a4a4a;"></div>
<div style="position:absolute;left:329.3px;top:216.5px;width:1px;height:21px;background:#4a4a4a;"></div>
<div style="position:absolute;left:403.75px;top:216.5px;width:1px;height:21px;background:#4a4a4a;"></div>
<div style="position:absolute;left:478.20000000000005px;top:216.5px;width:1px;height:21px;background:#4a4a4a;"></div>
<div style="position:absolute;left:552.65px;top:216.5px;width:1px;height:21px;background:#4a4a4a;"></div>
<div style="position:absolute;left:627.1px;top:216.5px;width:1px;height:21px;background:#4a4a4a;"></div>
<div style="position:absolute;left:3px;top:258.5px;width:29px;height:1px;background:#2e2e2e;"></div>
<div style="position:absolute;left:3px;top:280.0px;width:29px;height:1px;background:#2e2e2e;"></div>
<div style="position:absolute;left:3px;top:301.5px;width:29px;height:1px;background:#2e2e2e;"></div>
<div style="position:absolute;left:3px;top:323.0px;width:29px;height:1px;background:#2e2e2e;"></div>
<div style="position:absolute;left:3px;top:344.5px;width:29px;height:1px;background:#2e2e2e;"></div>
<div style="position:absolute;left:3px;top:366.0px;width:29px;height:1px;background:#2e2e2e;"></div>
<div style="position:absolute;left:3px;top:387.5px;width:29px;height:1px;background:#2e2e2e;"></div>
<div style="position:absolute;left:3px;top:409.0px;width:29px;height:1px;background:#2e2e2e;"></div>
<div style="position:absolute;left:3px;top:430.5px;width:29px;height:1px;background:#2e2e2e;"></div>
<div style="position:absolute;left:3px;top:452.0px;width:29px;height:1px;background:#2e2e2e;"></div>
<div style="position:absolute;left:3px;top:473.5px;width:29px;height:1px;background:#2e2e2e;"></div>
<div style="position:absolute;left:3px;top:495.0px;width:29px;height:1px;background:#2e2e2e;"></div>
<div style="position:absolute;left:3px;top:259.0px;width:29px;height:21.5px;background:#6b6b6b;"></div>
<div style="position:absolute;left:31px;top:259.0px;width:1px;height:21.5px;background:#3b7a57;"></div>
<div id="t40" class="t" style="left:13.46px;top:243.39px;font-size:14.53px;color:#f0f0f0;font-weight:400;font-family:'Liberation Sans', sans-serif;font-style:normal;">1</div>
<div id="t41" class="t" style="left:13.25px;top:263.89px;font-size:14.53px;color:#f0f0f0;font-weight:400;font-family:'Liberation Sans', sans-serif;font-style:normal;">2</div>
<div id="t42" class="t" style="left:13.28px;top:286.39px;font-size:14.53px;color:#f0f0f0;font-weight:400;font-family:'Liberation Sans', sans-serif;font-style:normal;">3</div>
<div id="t43" class="t" style="left:13.68px;top:306.89px;font-size:14.53px;color:#f0f0f0;font-weight:400;font-family:'Liberation Sans', sans-serif;font-style:normal;">4</div>
<div id="t44" class="t" style="left:13.65px;top:329.39px;font-size:14.53px;color:#f0f0f0;font-weight:400;font-family:'Liberation Sans', sans-serif;font-style:normal;">5</div>
<div id="t45" class="t" style="left:13.21px;top:349.89px;font-size:14.53px;color:#f0f0f0;font-weight:400;font-family:'Liberation Sans', sans-serif;font-style:normal;">6</div>
<div id="t46" class="t" style="left:13.25px;top:372.39px;font-size:14.53px;color:#f0f0f0;font-weight:400;font-family:'Liberation Sans', sans-serif;font-style:normal;">7</div>
<div id="t47" class="t" style="left:13.61px;top:392.89px;font-size:14.53px;color:#f0f0f0;font-weight:400;font-family:'Liberation Sans', sans-serif;font-style:normal;">8</div>
<div id="t48" class="t" style="left:13.25px;top:415.39px;font-size:14.53px;color:#f0f0f0;font-weight:400;font-family:'Liberation Sans', sans-serif;font-style:normal;">9</div>
<div id="t49" class="t" style="left:9.00px;top:435.89px;font-size:14.53px;color:#f0f0f0;font-weight:400;font-family:'Liberation Sans', sans-serif;font-style:normal;transform:scaleX(0.9614);letter-spacing:0.58px;">10</div>
<div id="t50" class="t" style="left:9.62px;top:458.39px;font-size:14.53px;color:#f0f0f0;font-weight:400;font-family:'Liberation Sans', sans-serif;font-style:normal;transform:scaleX(0.9579);letter-spacing:0.58px;">11</div>
<div id="t51" class="t" style="left:9.07px;top:478.89px;font-size:14.53px;color:#f0f0f0;font-weight:400;font-family:'Liberation Sans', sans-serif;font-style:normal;transform:scaleX(0.9610);letter-spacing:0.58px;">12</div>
<div id="t52" class="t" style="left:9.04px;top:501.39px;font-size:14.53px;color:#f0f0f0;font-weight:400;font-family:'Liberation Sans', sans-serif;font-style:normal;transform:scaleX(0.9612);letter-spacing:0.58px;">13</div>
<div style="position:absolute;left:106.15px;top:258.7px;width:75.35000000000001px;height:22.7px;border:2px solid #4a7a60;box-sizing:border-box;"></div>
<div style="position:absolute;left:179.1px;top:279.0px;width:3.6px;height:3.6px;background:#4a7a60;"></div>
<div style="position:absolute;left:704px;top:237px;width:16px;height:270px;background:#181818;"></div>
<div style="position:absolute;left:709.5px;top:236px;width:7.5px;height:145px;background:#9a9a9a;border-radius:4px;"></div>
<svg style="position:absolute;left:709px;top:497px" width="8" height="7" viewBox="0 0 8 7" fill="none"><path d="M0 0.5 H8 L4 6.5 Z" fill="#9a9a9a"/></svg>
<div style="position:absolute;left:3px;top:506px;width:717px;height:27.5px;background:#0e0e0e;"></div>
<svg style="position:absolute;left:22px;top:515px" width="7" height="10" viewBox="0 0 7 10" fill="none"><path d="M6 1 L1.5 5 L6 9" stroke="#a8a8a8" stroke-width="1.2"/></svg>
<svg style="position:absolute;left:51px;top:515px" width="7" height="10" viewBox="0 0 7 10" fill="none"><path d="M1 1 L5.5 5 L1 9" stroke="#a8a8a8" stroke-width="1.2"/></svg>
<div id="t53" class="t" style="left:106.24px;top:515.78px;font-size:12.06px;color:#f0f0f0;font-weight:400;font-family:'Liberation Sans', sans-serif;font-style:normal;transform:scaleX(0.9347);letter-spacing:0.48px;">Medical_history</div>
<div style="position:absolute;left:203.3px;top:513px;width:1px;height:14px;background:#555;"></div>
<div id="t54" class="t" style="left:213.73px;top:515.34px;font-size:12.94px;color:#f0f0f0;font-weight:400;font-family:'Liberation Sans', sans-serif;font-style:normal;transform:scaleX(0.8381);letter-spacing:0.52px;">Sheet1</div>
<div style="position:absolute;left:262px;top:513px;width:1px;height:14px;background:#555;"></div>
<svg style="position:absolute;left:258px;top:506px" width="66" height="26" viewBox="0 0 66 26"><path d="M0 0 Q6 0 6 6 V21 Q6 25 10 25 H56 Q60 25 60 21 V6 Q60 0 66 0 Z" fill="#fff"/></svg>
<div id="t55" class="t" style="left:271.67px;top:512.39px;font-size:12.65px;color:#1a1a1a;font-weight:400;font-family:'Liberation Sans', sans-serif;font-style:normal;transform:scaleX(0.9005);letter-spacing:0.51px;">Sheet2</div>
<div style="position:absolute;left:272.4px;top:526.3px;width:37.2px;height:1.8px;background:#217346;"></div>
<div style="position:absolute;left:320.5px;top:513px;width:1px;height:14px;background:#555;"></div>
<svg style="position:absolute;left:356px;top:513px" width="12" height="12" viewBox="0 0 12 12" fill="none"><path d="M6 0.5 V11.5 M0.5 6 H11.5" stroke="#d0d0d0" stroke-width="1.3"/></svg>
<div style="position:absolute;left:436.5px;top:515.5px;width:2px;height:2px;background:#d0d0d0;"></div>
<div style="position:absolute;left:436.5px;top:519.3px;width:2px;height:2px;background:#d0d0d0;"></div>
<div style="position:absolute;left:436.5px;top:523px;width:2px;height:2px;background:#d0d0d0;"></div>
<div style="position:absolute;left:451.5px;top:512px;width:252px;height:15.5px;background:#1c1c1c;border-radius:8px;"></div>
<svg style="position:absolute;left:455.5px;top:516px" width="7" height="8" viewBox="0 0 7 8" fill="none"><path d="M6.5 0 V7.5 L0 3.75 Z" fill="#a0a0a0"/></svg>
<div style="position:absolute;left:466.5px;top:516px;width:199.5px;height:7.5px;background:#9b9b9b;border-radius:4px;"></div>
<svg style="position:absolute;left:694.5px;top:515.8px" width="7" height="8" viewBox="0 0 7 8" fill="none"><path d="M0 0 V7.7 L6.7 3.85 Z" fill="#a0a0a0"/></svg>
<div style="position:absolute;left:3px;top:533.5px;width:717px;height:19.5px;background:#141414;"></div>
<div style="position:absolute;left:3px;top:533.5px;width:717px;height:1px;background:#2c2c2c;"></div>
<div id="t56" class="t" style="left:11.58px;top:540.52px;font-size:9.30px;color:#d8d8d8;font-weight:400;font-family:'Liberation Sans', sans-serif;font-style:normal;transform:scaleX(0.9658);letter-spacing:0.37px;">Edit</div>
<svg style="position:absolute;left:53px;top:538px" width="14" height="12" viewBox="0 0 14 12" fill="none"><path d="M5 10.8 H1 V1 H12.5 V4.5" stroke="#d0d0d0" stroke-width="1.1"/><path d="M1 2.5 H12.5" stroke="#d0d0d0" stroke-width="2"/><path d="M2.8 5 V6.2 M2.8 7.8 V9" stroke="#d0d0d0" stroke-width="0.9"/><circle cx="9.1" cy="7.6" r="3.7" fill="#161616" stroke="#d0d0d0" stroke-width="1.1"/><circle cx="9.1" cy="7.6" r="1.6" fill="#e0e0e0"/></svg>
<svg style="position:absolute;left:80.5px;top:537.5px" width="14" height="13" viewBox="0 0 14 13" fill="none"><circle cx="6" cy="2.6" r="1.5" stroke="#d8d8d8" stroke-width="1.1"/><path d="M1.2 4.2 C3 5.2,4.5 5.4,6 5.4 C7.5 5.4,9 5.2,10.8 4.2 M4.5 5.4 V8 L2.8 11.8 M7.5 5.4 V8 L8 9" stroke="#d8d8d8" stroke-width="1.2" stroke-linecap="round"/><path d="M7.2 8.2 L12.2 12.2 M12.2 8.2 L7.2 12.2" stroke="#d8d8d8" stroke-width="1.1"/></svg>
<div id="t57" class="t" style="left:96.65px;top:539.37px;font-size:11.48px;color:#e8e8e8;font-weight:700;font-family:'Liberation Sans', sans-serif;font-style:normal;transform:scaleX(0.7307);letter-spacing:0.46px;">Accessibility: Investigate</div>
<svg style="position:absolute;left:464px;top:537.5px" width="13" height="12" viewBox="0 0 13 12" fill="none"><path d="M0.7 0.7 H11.8 V11.3 H0.7 Z M4.4 0.7 V11.3 M8.1 0.7 V11.3 M0.7 4.2 H11.8 M0.7 7.8 H11.8" stroke="#6e6e6e" stroke-width="1.2"/></svg>
<svg style="position:absolute;left:498.5px;top:537.5px" width="14" height="12" viewBox="0 0 14 12" fill="none"><rect x="0.7" y="0.7" width="12.3" height="10.6" stroke="#6e6e6e" stroke-width="1.2"/><path d="M4 2.5 V9.5 M9.6 2.5 V9.5 M5.5 4.3 H8.1 M5.5 6 H8.1 M5.5 7.7 H8.1" stroke="#6e6e6e" stroke-width="1.1"/></svg>
<svg style="position:absolute;left:533.5px;top:537.5px" width="14" height="12" viewBox="0 0 14 12" fill="none"><rect x="0.7" y="0.7" width="12.5" height="10.6" stroke="#6e6e6e" stroke-width="1.2"/><path d="M5 0.7 V6.8 H0.7 M8.8 0.7 V6.8 H5" stroke="#6e6e6e" stroke-width="1.2"/></svg>
<div style="position:absolute;left:562.5px;top:543.5px;width:7px;height:1.2px;background:#5a5a5a;"></div>
<div style="position:absolute;left:574px;top:543.2px;width:86px;height:2px;background:#8e8e8e;"></div>
<div style="position:absolute;left:616.5px;top:540.3px;width:2px;height:6.8px;background:#c8c8c8;"></div>
<svg style="position:absolute;left:665px;top:540.5px" width="7" height="7" viewBox="0 0 7 7" fill="none"><path d="M3.5 0 V7 M0 3.5 H7" stroke="#5a5a5a" stroke-width="1.1"/></svg>
<div id="t58" class="t" style="left:681.41px;top:539.23px;font-size:9.88px;color:#686868;font-weight:400;font-family:'Liberation Sans', sans-serif;font-style:normal;transform:scaleX(0.8727);letter-spacing:0.40px;">100%</div>
<div style="position:absolute;left:630px;top:155.8px;width:90px;height:82px;background:#2b2b2b;border:1.2px solid #686868;border-radius:6px;box-sizing:border-box;box-shadow:0 5px 10px rgba(0,0,0,0.22);"></div>
<svg style="position:absolute;left:645px;top:163px" width="23" height="21" viewBox="0 0 23 21" fill="none"><path d="M0.5 2 C1.5 1.3, 2.5 1.3, 4 1.3 H21.7" stroke="#a0a0a0" stroke-width="1.4"/><path d="M5.7 1.3 V19.3 M15.9 1.3 V16 C15.9 18.3, 17.3 19.3, 21.4 19.3" stroke="#a0a0a0" stroke-width="1.4"/></svg>
<div id="t59" class="t" style="left:637.22px;top:191.58px;font-size:10.17px;color:#636363;font-weight:400;font-family:'Liberation Sans', sans-serif;font-style:normal;transform:scaleX(0.9636);letter-spacing:0.41px;">Equation</div>
<svg style="position:absolute;left:653.5px;top:206.5px" width="6" height="4" viewBox="0 0 6 4" fill="none"><path d="M0.7 0.7 L3 3 L5.3 0.7" stroke="#6a6a6a" stroke-width="1"/></svg>
<svg style="position:absolute;left:684px;top:162px" width="23" height="23" viewBox="0 0 23 23" fill="none"><path d="M0.8 21.2 H7.8 C3.5 18.5, 1.5 14.5, 1.5 10.2 C1.5 5, 5.8 1.5, 11.2 1.5 C16.6 1.5, 20.9 5, 20.9 10.2 C20.9 14.5, 18.9 18.5, 14.6 21.2 H21.6" stroke="#e0e0e0" stroke-width="1.5"/></svg>
<div id="t60" class="t" style="left:680.33px;top:191.58px;font-size:10.17px;color:#f2f2f2;font-weight:400;font-family:'Liberation Sans', sans-serif;font-style:normal;transform:scaleX(0.8205);-webkit-text-stroke:0.2px #f2f2f2;letter-spacing:0.41px;">Symbol</div>
<div id="t61" class="t" style="left:657.11px;top:228.26px;font-size:10.32px;color:#f2f2f2;font-weight:400;font-family:'Liberation Sans', sans-serif;font-style:normal;transform:scaleX(0.8181);letter-spacing:0.41px;">Symbols</div>
<div style="position:absolute;left:672.5px;top:156.5px;width:46px;height:52.5px;border:3px solid #d4232a;box-sizing:border-box;"></div>
<div style="position:absolute;left:54px;top:40px;width:51px;height:32.5px;border:3.2px solid #d4232a;box-sizing:border-box;"></div>
<div style="position:absolute;left:2px;top:1px;width:722px;height:553px;border:1.6px solid #676767;border-radius:9px;box-sizing:border-box;box-shadow:0 0 0 12px #050505;"></div>
</body></html>
